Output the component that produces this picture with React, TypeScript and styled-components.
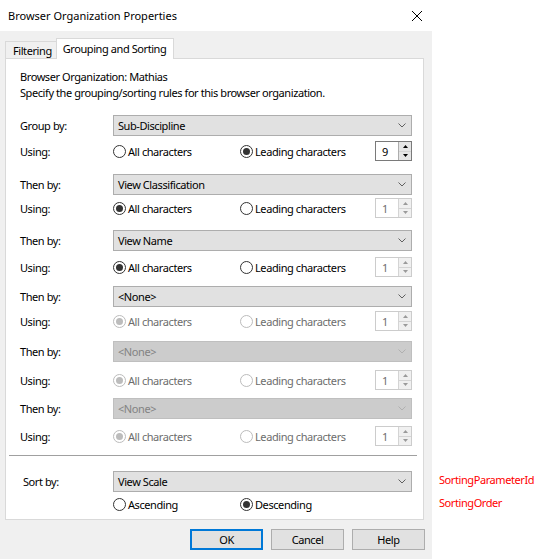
import React from "react";
import styled, { createGlobalStyle, css } from "styled-components";

const FONT = `"Noto Sans", "Liberation Sans", sans-serif`;

const GlobalStyle = createGlobalStyle`
  html, body { margin: 0; padding: 0; background: #ffffff; }
  body { font-family: ${FONT}; font-size: 11px; letter-spacing: -0.42px; color: #000; }
  * { box-sizing: border-box; }
`;

const Page = styled.div`
  display: flex;
  width: 536px;
  height: 559px;
  background: #ffffff;
  overflow: hidden;
`;

const Dialog = styled.div`
  width: 432px;
  height: 559px;
  display: flex;
  flex-direction: column;
`;

const TitleBar = styled.div`
  height: 31px;
  background: #ffffff;
  display: flex;
  align-items: center;
  justify-content: space-between;
  padding: 0 10px 0 8px;
`;

const Title = styled.span`
  font-size: 11px;
  letter-spacing: 0;
  color: #000;
`;

const Body = styled.div`
  flex: 1;
  background: #f0f0f0;
  padding: 7px 7px 0 5px;
  display: flex;
  flex-direction: column;
`;

const TabStrip = styled.div`
  display: flex;
  align-items: flex-end;
  height: 20px;
  position: relative;
  z-index: 1;
`;

const Tab = styled.div<{ $active?: boolean }>`
  display: flex;
  align-items: center;
  border: 1px solid #d9d9d9;
  border-bottom: none;
  ${(p) =>
    p.$active
      ? css`
          height: 21px;
          margin-bottom: -1px;
          background: #ffffff;
          padding: 0 7px 2px 6px;
        `
      : css`
          height: 17px;
          background: #f0f0f0;
          border-right: none;
          padding: 1px 4px 0 7px;
        `}
`;

const Panel = styled.div`
  width: 419px;
  height: 462px;
  background: #ffffff;
  border: 1px solid #d9d9d9;
  padding: 10px 0 0 14px;
  display: flex;
  flex-direction: column;
`;

const Intro = styled.div`
  line-height: 16px;
`;

const Row = styled.div<{ $top: number; $h?: number }>`
  display: flex;
  align-items: center;
  margin-top: ${(p) => p.$top}px;
  height: ${(p) => p.$h ?? 20}px;
  width: 392px;
`;

const Label = styled.div<{ $indent?: number }>`
  width: 93px;
  flex: none;
  padding-left: ${(p) => p.$indent ?? 0}px;
`;

const Combo = styled.div<{ $disabled?: boolean }>`
  width: 299px;
  height: 21px;
  display: flex;
  align-items: center;
  justify-content: space-between;
  padding: 0 5px 0 4px;
  border: 1px solid ${(p) => (p.$disabled ? "#bfbfbf" : "#adadad")};
  background: ${(p) => (p.$disabled ? "#cccccc" : "#e1e1e1")};
  color: ${(p) => (p.$disabled ? "#838383" : "#000")};
`;

const RadioSet = styled.div`
  display: flex;
  align-items: center;
  flex: 1;
`;

const RadioItem = styled.div<{ $w?: number; $disabled?: boolean }>`
  display: flex;
  align-items: center;
  gap: 2px;
  width: ${(p) => (p.$w ? `${p.$w}px` : "auto")};
  color: ${(p) => (p.$disabled ? "#6d6d6d" : "#000")};
`;

const Circle = styled.span<{ $checked?: boolean; $disabled?: boolean }>`
  width: 13px;
  height: 13px;
  border-radius: 50%;
  border: 1px solid ${(p) => (p.$disabled ? "#bcbcbc" : "#333333")};
  background: #ffffff;
  display: flex;
  align-items: center;
  justify-content: center;
  flex: none;
  &::after {
    content: "";
    display: ${(p) => (p.$checked ? "block" : "none")};
    width: 7px;
    height: 7px;
    border-radius: 50%;
    background: ${(p) => (p.$disabled ? "#bcbcbc" : "#333333")};
  }
`;

const Spinner = styled.div<{ $active?: boolean }>`
  width: 37px;
  height: 20px;
  margin-left: auto;
  display: flex;
  border: 1px solid ${(p) => (p.$active ? "#7a7a7a" : "#cccccc")};
  background: #ffffff;
`;

const SpinValue = styled.div<{ $active?: boolean }>`
  flex: 1;
  display: flex;
  align-items: center;
  padding-left: 6px;
  color: ${(p) => (p.$active ? "#000" : "#6d6d6d")};
`;

const SpinButtons = styled.div<{ $active?: boolean }>`
  width: 13px;
  display: flex;
  flex-direction: column;
  border-left: 1px solid ${(p) => (p.$active ? "#adadad" : "#d4d4d4")};
`;

const SpinButton = styled.div<{ $active?: boolean }>`
  flex: 1;
  display: flex;
  align-items: center;
  justify-content: center;
  background: ${(p) => (p.$active ? "#e5e5e5" : "#f0f0f0")};
  & + & {
    border-top: 1px solid ${(p) => (p.$active ? "#adadad" : "#d4d4d4")};
  }
`;

const Separator = styled.div`
  margin: 9px 0 0 -11px;
  width: 408px;
  height: 1px;
  background: #a0a0a0;
`;

const ButtonRow = styled.div`
  display: flex;
  justify-content: flex-end;
  gap: 8px;
  margin-top: 9px;
`;

const Button = styled.div<{ $default?: boolean }>`
  width: 73px;
  height: 21px;
  display: flex;
  align-items: center;
  justify-content: center;
  background: #e1e1e1;
  border: ${(p) => (p.$default ? "2px solid #0078d7" : "1px solid #adadad")};
`;

const Notes = styled.div`
  display: flex;
  flex-direction: column;
  padding: 471px 0 0 7px;
  gap: 6px;
  color: #ff0000;
  line-height: 17px;
`;

const Chevron = ({ disabled }: { disabled?: boolean }) => (
  <svg width="8" height="5" viewBox="0 0 8 5">
    <path d="M0.5 0.5 L4 4 L7.5 0.5" fill="none" stroke={disabled ? "#b0b0b0" : "#606060"} strokeWidth="1" />
  </svg>
);

const CloseIcon = () => (
  <svg width="10" height="10" viewBox="0 0 10 10">
    <path d="M0 0 L10 10 M10 0 L0 10" stroke="#000" strokeWidth="1" />
  </svg>
);

const Arrow = ({ up, active }: { up?: boolean; active?: boolean }) => (
  <svg width="5" height="3" viewBox="0 0 5 3">
    <path d={up ? "M0 3 L2.5 0 L5 3 Z" : "M0 0 L5 0 L2.5 3 Z"} fill={active ? "#000" : "#9a9a9a"} />
  </svg>
);

type UsingProps = { leading?: boolean; disabled?: boolean; value: string; top: number };

const UsingRow = ({ leading, disabled, value, top }: UsingProps) => (
  <Row $top={top}>
    <Label>Using:</Label>
    <RadioSet>
      <RadioItem $w={127} $disabled={disabled}>
        <Circle $checked={!leading} $disabled={disabled} />
        All characters
      </RadioItem>
      <RadioItem $disabled={disabled}>
        <Circle $checked={!!leading} $disabled={disabled} />
        Leading characters
      </RadioItem>
      <Spinner $active={leading}>
        <SpinValue $active={leading}>{value}</SpinValue>
        <SpinButtons $active={leading}>
          <SpinButton $active={leading}>
            <Arrow up active={leading} />
          </SpinButton>
          <SpinButton $active={leading}>
            <Arrow active={leading} />
          </SpinButton>
        </SpinButtons>
      </Spinner>
    </RadioSet>
  </Row>
);

type ComboRowProps = { label: string; text: string; disabled?: boolean; top: number; indent?: number };

const ComboRow = ({ label, text, disabled, top, indent }: ComboRowProps) => (
  <Row $top={top} $h={21}>
    <Label $indent={indent}>{label}</Label>
    <Combo $disabled={disabled}>
      <span>{text}</span>
      <Chevron disabled={disabled} />
    </Combo>
  </Row>
);

export default function App() {
  return (
    <>
      <GlobalStyle />
      <Page>
        <Dialog>
          <TitleBar>
            <Title>Browser Organization Properties</Title>
            <CloseIcon />
          </TitleBar>
          <Body>
            <TabStrip>
              <Tab>Filtering</Tab>
              <Tab $active>Grouping and Sorting</Tab>
            </TabStrip>
            <Panel>
              <Intro>Browser Organization: Mathias</Intro>
              <Intro>Specify the grouping/sorting rules for this browser organization.</Intro>
              <ComboRow top={14} label="Group by:" text="Sub-Discipline" />
              <UsingRow top={5} leading value="9" />
              <ComboRow top={13} label="Then by:" text="View Classification" />
              <UsingRow top={3} value="1" />
              <ComboRow top={12} label="Then by:" text="View Name" />
              <UsingRow top={6} value="1" />
              <ComboRow top={9} label="Then by:" text="<None>" />
              <UsingRow top={4} disabled value="1" />
              <ComboRow top={10} label="Then by:" text="<None>" disabled />
              <UsingRow top={8} disabled value="1" />
              <ComboRow top={8} label="Then by:" text="<None>" disabled />
              <UsingRow top={7} disabled value="1" />
              <Separator />
              <ComboRow top={15} label="Sort by:" text="View Scale" indent={3} />
              <Row $top={2}>
                <Label />
                <RadioSet>
                  <RadioItem $w={127}>
                    <Circle />
                    Ascending
                  </RadioItem>
                  <RadioItem>
                    <Circle $checked />
                    Descending
                  </RadioItem>
                </RadioSet>
              </Row>
            </Panel>
            <ButtonRow>
              <Button $default>OK</Button>
              <Button>Cancel</Button>
              <Button>Help</Button>
            </ButtonRow>
          </Body>
        </Dialog>
        <Notes>
          <span>SortingParameterId</span>
          <span>SortingOrder</span>
        </Notes>
      </Page>
    </>
  );
}
